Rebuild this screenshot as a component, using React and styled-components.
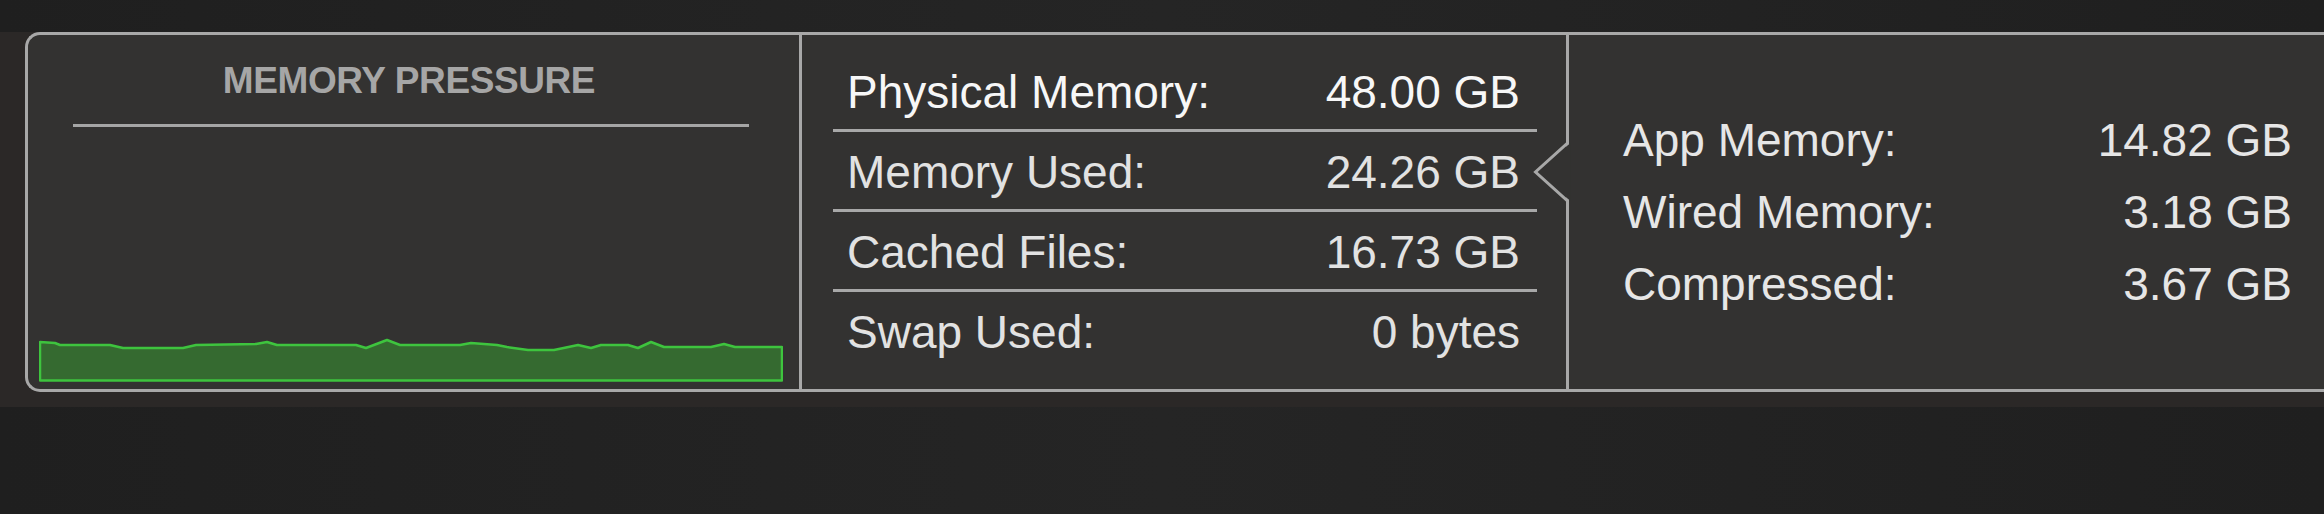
import React from "react";
import styled, { createGlobalStyle } from "styled-components";

const GlobalStyle = createGlobalStyle`
  html, body { margin: 0; padding: 0; background: #222222; }
  * { box-sizing: border-box; }
`;

const Page = styled.div`
  width: 2324px;
  height: 514px;
  overflow: hidden;
  padding-top: 32px;
  background: linear-gradient(90deg, #1f1f1f 0%, #252525 50%, #1f1f1f 100%);
`;

const Band = styled.div`
  background: #2b2827;
  padding: 0 0 15px 25px;
`;

const Panel = styled.div`
  display: flex;
  width: 2380px;
  height: 360px;
  border: 3px solid #a8a8a8;
  border-right: none;
  border-radius: 15px 0 0 15px;
  background: #333231;
  font-family: "Liberation Sans", Arial, sans-serif;
`;

const PressurePane = styled.div`
  width: 771px;
  display: flex;
  flex-direction: column;
  padding-top: 27px;
`;

const PressureTitle = styled.div`
  font-weight: 700;
  font-size: 37px;
  line-height: 37px;
  letter-spacing: -0.4px;
  text-transform: uppercase;
  text-align: center;
  color: #a6a6a6;
  margin-right: 9px;
`;

const TitleRule = styled.div`
  height: 3px;
  background: #a5a5a5;
  margin: 25px 50px 0 45px;
`;

const GraphSvg = styled.svg`
  display: block;
  margin: auto 16px 7px 11px;
`;

const UsagePane = styled.div`
  width: 767px;
  border-left: 3px solid #a8a8a8;
  padding: 17px 29px 0 31px;
`;

const UsageRow = styled.div`
  display: flex;
  justify-content: space-between;
  padding: 3px 17px 0 14px;
  font-size: 46px;
  line-height: 74px;
  color: ${(p) => p.$color};
  border-bottom: ${(p) => (p.$last ? "none" : "3px solid #a8a8a8")};
`;

const DetailPane = styled.div`
  position: relative;
  flex: 1;
  display: flex;
  align-items: center;
  border-left: 3px solid #a8a8a8;
  padding-left: 54px;
`;

const DetailGrid = styled.div`
  display: grid;
  grid-template-columns: 1fr auto;
  width: 669px;
  font-size: 46px;
  line-height: 72px;
  color: #e6e6e6;
`;

const Value = styled.span`
  text-align: right;
`;

const Notch = styled.svg`
  position: absolute;
  left: -37px;
  top: 105px;
  overflow: visible;
`;

const graphPoints = [
  [1, 6], [16, 7], [21, 9], [71, 9], [84, 12], [144, 12], [157, 9], [217, 8],
  [228, 6], [238, 9], [317, 9], [327, 12], [348, 4], [361, 9], [421, 9],
  [432, 7], [458, 9], [468, 11], [489, 14], [515, 14], [539, 9], [552, 12],
  [562, 9], [589, 9], [599, 12], [612, 6], [625, 11], [672, 11], [685, 8],
  [696, 11], [743, 11], [743, 44.5], [1, 44.5],
];

const usage = [
  { label: "Physical Memory:", value: "48.00 GB", color: "#f7f7f7" },
  { label: "Memory Used:", value: "24.26 GB", color: "#e2e2e2" },
  { label: "Cached Files:", value: "16.73 GB", color: "#e2e2e2" },
  { label: "Swap Used:", value: "0 bytes", color: "#e2e2e2" },
];

const details = [
  { label: "App Memory:", value: "14.82 GB" },
  { label: "Wired Memory:", value: "3.18 GB" },
  { label: "Compressed:", value: "3.67 GB" },
];

export default function App() {
  return (
    <>
      <GlobalStyle />
      <Page>
        <Band>
          <Panel>
            <PressurePane>
              <PressureTitle>Memory Pressure</PressureTitle>
              <TitleRule />
              <GraphSvg width="744" height="46" viewBox="0 0 744 46">
                <polygon
                  points={graphPoints.map((p) => p.join(",")).join(" ")}
                  fill="#356a30"
                  stroke="#3ec43e"
                  strokeWidth="2.5"
                  strokeLinejoin="round"
                />
              </GraphSvg>
            </PressurePane>
            <UsagePane>
              {usage.map((r, i) => (
                <UsageRow key={r.label} $color={r.color} $last={i === usage.length - 1}>
                  <span>{r.label}</span>
                  <span>{r.value}</span>
                </UsageRow>
              ))}
            </UsagePane>
            <DetailPane>
              <Notch width="40" height="66" viewBox="0 0 40 66">
                <polygon points="38.5,3 3.5,32 38.5,61" fill="#333231" />
                <polyline
                  points="35.5,0 35.5,3 3.5,32 35.5,61 35.5,66"
                  fill="none"
                  stroke="#a8a8a8"
                  strokeWidth="3"
                />
              </Notch>
              <DetailGrid>
                {details.map((d) => (
                  <React.Fragment key={d.label}>
                    <span>{d.label}</span>
                    <Value>{d.value}</Value>
                  </React.Fragment>
                ))}
              </DetailGrid>
            </DetailPane>
          </Panel>
        </Band>
      </Page>
    </>
  );
}
